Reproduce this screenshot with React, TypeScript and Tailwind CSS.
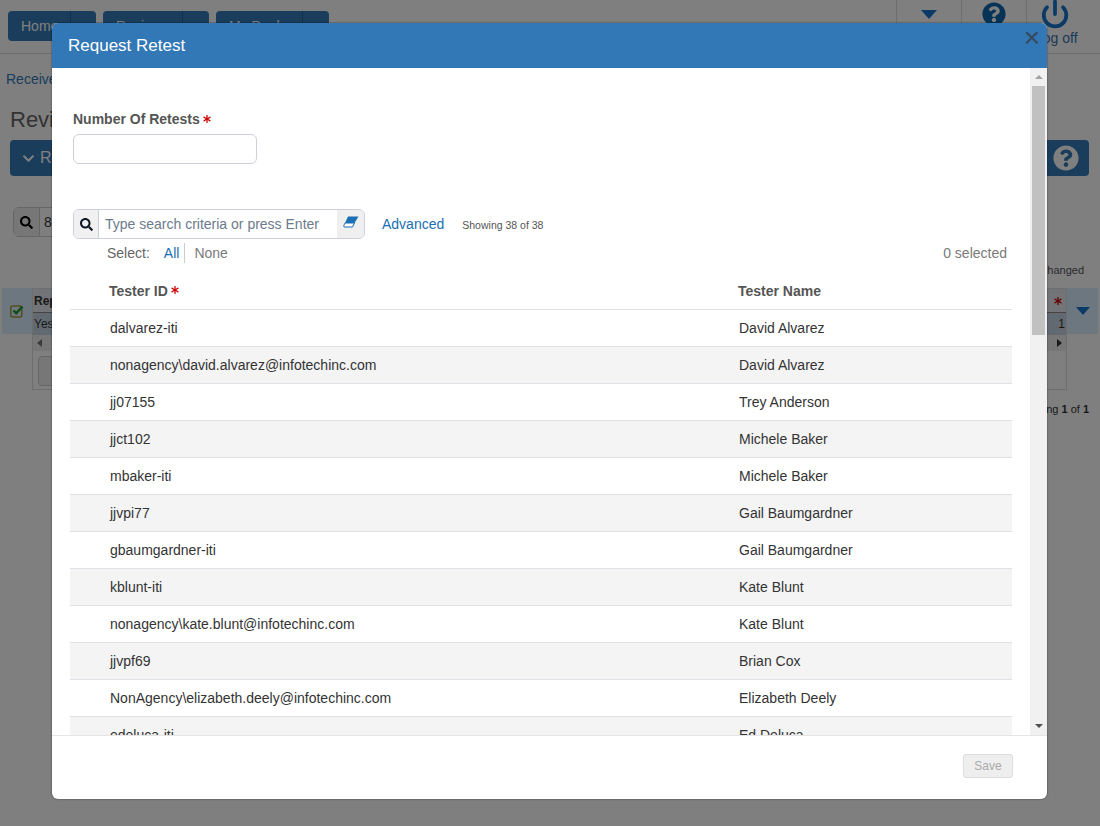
import React from "react";
import { FaQuestionCircle, FaSearch, FaChevronDown, FaAsterisk } from "react-icons/fa";
import { Power } from "lucide-react";

const rows: [string, string][] = [
  ["dalvarez-iti", "David Alvarez"],
  ["nonagency\\david.alvarez@infotechinc.com", "David Alvarez"],
  ["jj07155", "Trey Anderson"],
  ["jjct102", "Michele Baker"],
  ["mbaker-iti", "Michele Baker"],
  ["jjvpi77", "Gail Baumgardner"],
  ["gbaumgardner-iti", "Gail Baumgardner"],
  ["kblunt-iti", "Kate Blunt"],
  ["nonagency\\kate.blunt@infotechinc.com", "Kate Blunt"],
  ["jjvpf69", "Brian Cox"],
  ["NonAgency\\elizabeth.deely@infotechinc.com", "Elizabeth Deely"],
  ["edeluca-iti", "Ed Deluca"],
];

function NavButton({ label, w, main }: { label: string; w: string; main: string }) {
  return (
    <div className={`flex h-[30px] rounded bg-[#337ab7] text-[#ffffff] text-[14px] ${w}`}>
      <div className={`flex items-center pl-[13px] border-r border-[#2a5f90] ${main}`}>{label}</div>
    </div>
  );
}

function Star({ className = "" }: { className?: string }) {
  return <FaAsterisk className={`inline-block text-[#cc0000] w-[8px] h-[8px] ml-[3px] ${className}`} />;
}

function BackgroundPage() {
  return (
    <div className="h-[826px] w-[1100px] overflow-hidden bg-white text-[#333333]">
      <div className="flex h-[54px] items-start justify-between border-b border-[#dddddd]">
        <div className="flex gap-[7px] pl-2 pt-[11px]">
          <NavButton label="Home" w="w-[88px]" main="w-[63px]" />
          <NavButton label="Review" w="w-[106px]" main="w-[80px]" />
          <NavButton label="My Dash" w="w-[113px]" main="w-[87px]" />
        </div>
        <div className="flex h-[53px] pr-[9px]">
          <div className="flex w-[65px] items-start justify-center border-l border-[#dddddd] pt-[10px]">
            <span className="h-0 w-0 border-x-[8px] border-t-[9px] border-x-transparent border-t-[#1674cc]" />
          </div>
          <div className="flex w-[65px] items-start justify-center border-l border-[#dddddd] pt-[2px]">
            <FaQuestionCircle className="h-[24px] w-[24px] text-[#0f68ad]" />
          </div>
          <div className="flex w-[65px] flex-col items-start border-l border-[#dddddd] text-[14px] leading-[15px] text-[#3975b5]">
            <Power className="ml-[13px] mt-[-1px] h-[30px] w-[30px] text-[#1674cc]" strokeWidth={3} />
            <span className="ml-[8px] mt-[2px]">Log off</span>
          </div>
        </div>
      </div>
      <div className="pl-[6px] pt-[16px] text-[14px] leading-[18px] text-[#337ab7]">Received</div>
      <div className="pl-[10px] pt-[19px] text-[22px] leading-[26px] text-[#666666]">Review</div>
      <div className="mx-[10px] mt-[7px] flex h-[36px] w-[1079px] items-center justify-between rounded bg-[#337ab7] pl-[12px] pr-[10px] text-[16px] text-white">
        <div className="flex items-center gap-[5px]">
          <FaChevronDown className="h-[13px] w-[13px]" />
          <span>Retest</span>
        </div>
        <FaQuestionCircle className="h-[26px] w-[26px]" />
      </div>
      <div className="ml-[13px] mt-[31px] flex h-[30px] w-[200px] items-center rounded-md border border-[#cccccc] text-[14px]">
        <div className="flex h-full w-[26px] items-center justify-center border-r border-[#cccccc] bg-[#eeeeee]">
          <FaSearch className="h-[13px] w-[13px] text-black" />
        </div>
        <span className="pl-[4px]">8</span>
      </div>
      <div className="pr-[16px] pt-[27px] text-right text-[11px] leading-[13px] text-[#555555]">Last Changed</div>
      <div className="flex pl-[2px] pt-[11px]">
        <div className="flex h-[46px] w-[30px] items-center justify-center bg-[#d9eeff]">
          <svg width="14" height="14" viewBox="0 0 14 14" fill="none" aria-hidden="true">
            <rect x="0.75" y="2" width="11" height="11" rx="2" stroke="#a89a3c" strokeWidth="1.5" />
            <path d="M3.5 6.5 L6.2 9.2 L12.5 2.5" stroke="#1f9a2a" strokeWidth="2.4" />
          </svg>
        </div>
        <div className="h-[102px] w-[1035px] border border-[#dddddd] text-[12px]">
          <div className="flex h-[24px] items-center justify-between border-b border-[#888888] bg-[#e4e9ee] pl-[1px] pr-[4px] font-bold">
            <span>Rep</span>
            <Star />
          </div>
          <div className="flex h-[22px] items-center justify-between bg-[#c4d3e2] pl-[1px] pr-[1px]">
            <span>Yes</span>
            <span>1</span>
          </div>
          <div className="flex h-[16px] items-center justify-between bg-[#eeeeee] px-[4px]">
            <span className="h-0 w-0 border-y-[4px] border-r-[5px] border-y-transparent border-r-[#777777]" />
            <span className="h-0 w-0 border-y-[4px] border-l-[5px] border-y-transparent border-l-[#333333]" />
          </div>
          <div className="ml-[5px] mt-[5px] h-[30px] w-[60px] rounded border border-[#cccccc] bg-[#eeeeee]" />
        </div>
        <div className="flex h-[46px] w-[31px] items-center justify-center bg-[#d9eeff]">
          <span className="h-0 w-0 border-x-[7px] border-t-[8px] border-x-transparent border-t-[#1674cc]" />
        </div>
      </div>
      <div className="pr-[11px] pt-[12px] text-right text-[11px] leading-[14px]">
        Showing <b>1</b> of <b>1</b>
      </div>
    </div>
  );
}

function Modal() {
  return (
    <div className="absolute left-[52px] top-[23px] flex h-[776px] w-[995px] flex-col overflow-hidden rounded-md bg-white shadow-[0_0_2px_rgba(0,0,0,0.6)]">
      <div className="relative flex h-[45px] shrink-0 items-center bg-[#3277b6] pl-[16px] text-[17px] text-white">
        Request Retest
        <span className="absolute right-[7px] top-[2px] text-[28px] leading-[26px] text-[#36485c]">×</span>
      </div>
      <div className="flex h-[667px] shrink-0">
        <div className="h-full w-[978px] overflow-hidden pl-[18px]">
          <div className="pl-[3px] pt-[43px] text-[14px] leading-[17px] font-bold text-[#555555]">
            Number Of Retests<Star className="mb-[3px]" />
          </div>
          <div className="ml-[3px] mt-[6px] h-[30px] w-[184px] rounded-md border border-[#ccd0d8] bg-white" />
          <div className="ml-[3px] mt-[45px] flex h-[30px] items-center">
            <div className="flex h-[30px] w-[292px] overflow-hidden rounded-md border border-[#ccd0d8] text-[14px]">
              <div className="flex w-[25px] items-center justify-center border-r border-[#ccd0d8] bg-[#f1f1f1]">
                <FaSearch className="h-[13px] w-[13px] text-[#111827]" />
              </div>
              <div className="flex flex-1 items-center pl-[6px] text-[#6b7a8c]">Type search criteria or press Enter</div>
              <div className="flex w-[27px] items-center justify-center bg-[#efefef] pb-[3px]">
                <svg width="16" height="13" viewBox="0 0 16 13" fill="none" aria-hidden="true">
                  <path d="M5 0.5 H15.5 L11.5 7 H2 Z" fill="#1a6fb5" />
                  <path d="M2 7 H11.5 L9.5 11 H1 L0.8 9.5 Z" fill="#ffffff" stroke="#1a6fb5" strokeWidth="1" />
                </svg>
              </div>
            </div>
            <span className="ml-[17px] text-[14px] text-[#1a6fb0]">Advanced</span>
            <span className="ml-[18px] pt-[3px] text-[10.5px] text-[#555555]">Showing 38 of 38</span>
          </div>
          <div className="flex h-[28px] w-[937px] items-center justify-between pl-[37px] text-[14px] text-[#7a7a7a]">
            <div className="flex items-center">
              <span className="text-[#666666]">Select:</span>
              <span className="ml-[14px] border-r border-[#cccccc] pr-[5px] leading-[20px] text-[#1a6fb0]">All</span>
              <span className="ml-[9px]">None</span>
            </div>
            <span>0 selected</span>
          </div>
          <div className="w-[942px] text-[14px] text-[#333333]">
            <div className="flex h-[43px] items-center border-b border-[#dfe1e6] pt-[6px] font-bold text-[#555555]">
              <div className="w-[668px] pl-[39px]">
                Tester ID<Star className="mb-[3px]" />
              </div>
              <div>Tester Name</div>
            </div>
            {rows.map((r, i) => (
              <div key={r[0]} className={`flex h-[37px] items-center border-b border-[#dfe1e6] ${i % 2 === 1 ? "bg-[#f4f4f4]" : "bg-white"}`}>
                <div className="w-[669px] pl-[40px]">{r[0]}</div>
                <div>{r[1]}</div>
              </div>
            ))}
          </div>
        </div>
        <div className="flex h-full w-[17px] flex-col items-center bg-[#f1f1f1]">
          <div className="flex h-[18px] w-full items-center justify-center">
            <span className="h-0 w-0 border-x-[4px] border-b-[4px] border-x-transparent border-b-[#a3a3a3]" />
          </div>
          <div className="h-[249px] w-[13px] bg-[#c1c1c1]" />
          <div className="flex-1" />
          <div className="flex h-[18px] w-full items-center justify-center">
            <span className="h-0 w-0 border-x-[4px] border-t-[4px] border-x-transparent border-t-[#505050]" />
          </div>
        </div>
      </div>
      <div className="flex flex-1 items-start justify-end border-t border-[#e5e5e5] pr-[34px] pt-[18px]">
        <div className="flex h-[24px] w-[50px] items-center justify-center rounded-[3px] border border-[#dddddd] bg-[#eeeeee] text-[12px] text-[#aaaaaa]">
          Save
        </div>
      </div>
    </div>
  );
}

export default function App() {
  return (
    <div className="relative h-[826px] w-[1100px] overflow-hidden" style={{ fontFamily: '"Liberation Sans", Arial, sans-serif' }}>
      <BackgroundPage />
      <div className="absolute inset-0 bg-black/50" />
      <Modal />
    </div>
  );
}
